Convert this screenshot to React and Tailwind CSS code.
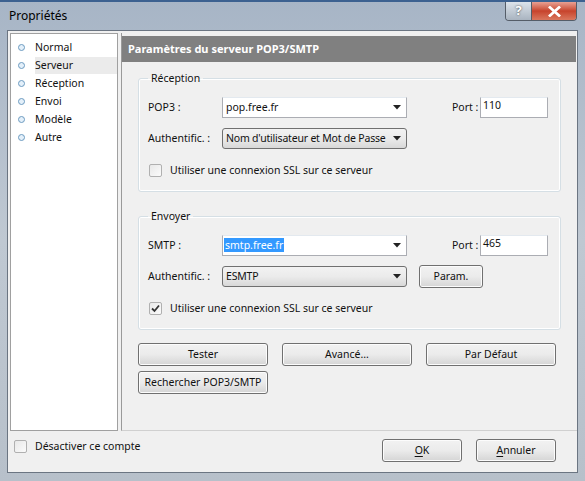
import React from "react";

const font = { fontFamily: '"Noto Sans", "Open Sans", sans-serif' };

const Check = ({ checked }) => (
  <span className="w-[13px] h-[13px] rounded-[2px] border border-[#b0b0b0] bg-gradient-to-br from-[#e8e8e8] to-[#fbfbfb] flex items-center justify-center shrink-0">
    {checked && (
      <svg width="9" height="9" viewBox="0 0 9 9">
        <path d="M1 4.5 L3.5 7 L8 1.5" stroke="#333" strokeWidth="1.8" fill="none" />
      </svg>
    )}
  </span>
);

const Caret = () => (
  <svg width="8" height="5" viewBox="0 0 8 5" className="shrink-0">
    <path d="M0 0 H8 L4 4.5 Z" fill="#222" />
  </svg>
);

const Btn = ({ children, className = "" }) => (
  <button
    className={
      "h-[23px] whitespace-nowrap rounded-[3px] border border-[#707070] bg-gradient-to-b from-[#f2f2f2] via-[#ebebeb] to-[#d5d5d5] text-[10.5px] text-[#111] flex items-center justify-center shadow-[inset_0_0_0_1px_#fcfcfc] " +
      className
    }
  >
    {children}
  </button>
);

const GroupBox = ({ title, children }) => (
  <fieldset className="border border-[#d5dfe5] rounded-[3px] mx-[16px] px-[8px] pt-[6px] pb-[13px] shadow-[inset_0_0_0_1px_#fff]">
    <legend className="px-[3px] ml-[1px] text-[10.5px] leading-[14px] text-[#111]">{title}</legend>
    {children}
  </fieldset>
);

const ServerRow = ({ label, value, selected, port }) => (
  <div className="flex items-center h-[21px] whitespace-nowrap">
    <span className="w-[75px] text-[10.5px] pl-[1px]">{label}</span>
    <div className="w-[185px] h-[21px] border border-[#abadb3] border-t-[#e3e9ef] bg-white flex items-center pl-[1px] pr-[5px]">
      <span
        className={
          "text-[10.5px] flex-1 leading-[15px] " +
          (selected ? "" : "pl-[2px]")
        }
      >
        {selected ? (
          <span className="bg-[#3399ff] text-white px-[1px]">{value}</span>
        ) : (
          value
        )}
      </span>
      <Caret />
    </div>
    <span className="ml-[45px] w-[28px] text-[10.5px]">Port :</span>
    <div className="w-[68px] h-[21px] border border-[#abadb3] border-t-[#e3e9ef] bg-white text-[10.5px] pl-[2px] leading-[15px]">
      {port}
    </div>
  </div>
);

const AuthRow = ({ value, param }) => (
  <div className="flex items-center h-[21px] mt-[10px] whitespace-nowrap">
    <span className="w-[75px] text-[10.5px] pl-[1px]">Authentific. :</span>
    <div className="w-[185px] h-[21px] rounded-[3px] border border-[#707070] bg-gradient-to-b from-[#f2f2f2] via-[#ebebeb] to-[#d8d8d8] flex items-center pl-[3px] pr-[5px]">
      <span className="text-[10.5px] tracking-[-0.2px] flex-1">{value}</span>
      <Caret />
    </div>
    {param && <Btn className="ml-[12px] w-[64px]">Param.</Btn>}
  </div>
);

const SslRow = ({ checked }) => (
  <div className="flex items-center gap-[8px] mt-[14px] pl-[2px] h-[15px]">
    <Check checked={checked} />
    <span className="text-[10.5px]">Utiliser une connexion SSL sur ce serveur</span>
  </div>
);

const menu = ["Normal", "Serveur", "Réception", "Envoi", "Modèle", "Autre"];

export default function App() {
  return (
    <div
      className="w-[585px] h-[481px] flex flex-col bg-gradient-to-b from-[#a7b5c6] via-[#bfc8d2] to-[#b7c0ca] text-[#111] overflow-hidden"
      style={font}
    >
      {/* title bar */}
      <div className="h-[30px] flex justify-between shrink-0 border-t-[2px] border-[#3c6190]">
        <span className="text-[12px] pl-[9px] pt-[5px] text-black">Propriétés</span>
        <div className="flex mr-[8px] h-[19px] border border-[#555d68] border-t-0 rounded-b-[4px] overflow-hidden">
          <div className="w-[26px] bg-gradient-to-b from-[#dce3eb] to-[#a9b4c0] flex items-center justify-center text-white text-[13px] font-bold border-r border-[#555d68] [text-shadow:0_0_2px_#333]">
            ?
          </div>
          <div className="w-[44px] bg-gradient-to-b from-[#e8a093] via-[#c7432c] to-[#d9765d] flex items-center justify-center">
            <svg width="13" height="11" viewBox="0 0 13 11">
              <path d="M2 1.5 L11 9.5 M11 1.5 L2 9.5" stroke="#fff" strokeWidth="2.8" strokeLinecap="square" />
            </svg>
          </div>
        </div>
      </div>

      {/* client area */}
      <div className="flex-1 mx-[7px] mb-[8px] bg-[#f0f0f0] border border-[#6b7582] flex flex-col">
        <div className="flex h-[400px] pt-[2px] pl-[2px]">
          {/* page list */}
          <div className="w-[108px] bg-white border border-[#a0a0a0] pt-[4px]">
            {menu.map((m) => (
              <div key={m} className="flex items-center h-[18px]">
                <span className="w-[7px] h-[7px] rounded-full border border-[#6c9bc0] bg-[#e4f0fa] ml-[7px] mr-[10px]" />
                <span
                  className={
                    "text-[10.5px] flex-1 h-[17px] leading-[17px] " +
                    (m === "Serveur" ? "bg-[#ebebeb]" : "")
                  }
                >
                  {m}
                </span>
              </div>
            ))}
          </div>

          {/* server settings panel */}
          <div className="flex-1 ml-[3px] border-l border-[#9a9a9a] border-b border-b-[#d0d0d0] flex flex-col">
            <div className="mt-[3px] mr-[1px] h-[26px] bg-[#808080] text-white font-bold text-[11px] flex items-center pl-[6px]">
              Paramètres du serveur POP3/SMTP
            </div>

            <div className="mt-[9px]">
              <GroupBox title="Réception">
                <div className="pt-[6px]">
                  <ServerRow label="POP3 :" value="pop.free.fr" port="110" />
                  <AuthRow value="Nom d'utilisateur et Mot de Passe" />
                  <SslRow />
                </div>
              </GroupBox>
            </div>

            <div className="mt-[17px]">
              <GroupBox title="Envoyer">
                <div className="pt-[6px]">
                  <ServerRow label="SMTP :" value="smtp.free.fr" selected port="465" />
                  <AuthRow value="ESMTP" param />
                  <SslRow checked />
                </div>
              </GroupBox>
            </div>

            <div className="mt-[13px] ml-[16px] grid grid-cols-[130px_130px_130px] gap-x-[14px] gap-y-[5px]">
              <Btn>Tester</Btn>
              <Btn>Avancé...</Btn>
              <Btn>Par Défaut</Btn>
              <Btn>Rechercher POP3/SMTP</Btn>
            </div>
          </div>
        </div>

        {/* footer */}
        <div className="flex-1 flex items-start pt-[8px]">
          <div className="flex items-center gap-[8px] pl-[6px]">
            <Check />
            <span className="text-[10.5px]">Désactiver ce compte</span>
          </div>
          <div className="ml-auto flex gap-[14px] mr-[21px]">
            <Btn className="w-[80px]">
              <span className="underline underline-offset-2">O</span>K
            </Btn>
            <Btn className="w-[80px]">
              <span className="underline underline-offset-2">A</span>nnuler
            </Btn>
          </div>
        </div>
      </div>
    </div>
  );
}
